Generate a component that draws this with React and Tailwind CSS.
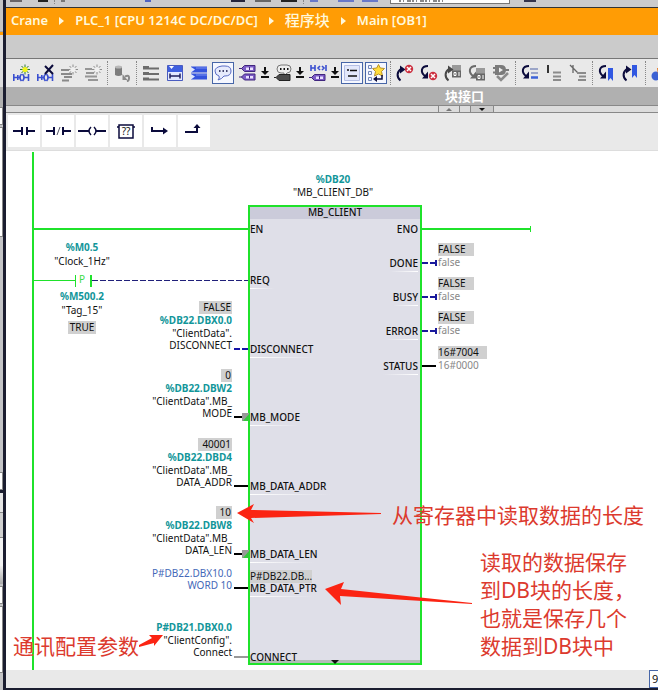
import React from 'react';
import clsx from 'clsx';

const NAVY = '#0b0b3c';
const BLUE = '#3a4fd0';
const GREEN = '#1fe22b';

const Icon = ({ children, w = 18 }) => (
  <svg width={w} height="18" viewBox={`0 0 ${w} 18`} fill="none" aria-hidden="true">
    {children}
  </svg>
);

/* Shared icon parts */
const Contacts = ({ y = 10, color = BLUE }) => (
  <g stroke={color} strokeWidth="1.600">
    <path d={`M1.800 ${y}v7M2 ${y + 3.5}h3M5.800 ${y + 1}v5M9.500 ${y}q-3 3.500 0 7M10.500 ${y}q3 3.500 0 7M16.500 ${y}v7`} />
    <path d={`M6 ${y + 3.5}h2M12 ${y + 3.5}h4`} />
  </g>
);

const Spark = ({ x, y, color, core }) => (
  <g transform={`translate(${x} ${y})`}>
    <path d="M0-5V5M-5 0H5M-3.500-3.500L3.500 3.500M-3.500 3.500L3.500-3.500" stroke={color} strokeWidth="1" />
    <circle r="2.600" fill={core} />
  </g>
);

const Tag = ({ y, fill = '#7d5cc6', edge = '#40267e' }) => (
  <g>
    <path d={`M0 ${y + 3.5}h3M2.500 ${y + 3.5}l3-3h10.500v6H5.500z`} fill={fill} stroke={edge} />
    <path d={`M7 ${y + 2.5}h7v2.500h-7z`} fill="#e9e0ff" />
    <path d={`M10.500 ${y + 2}v3`} stroke={edge} />
  </g>
);

const RedX = ({ x, y }) => (
  <g transform={`translate(${x} ${y})`}>
    <circle r="4.200" fill="#cc3040" />
    <path d="M-2-2L2 2M-2 2L2-2" stroke="#fff" strokeWidth="1.500" />
  </g>
);

const ArcUp = ({ color = NAVY }) => (
  <g>
    <path d="M4.500 16.500C0 13 1 7 5.500 5" stroke={color} strokeWidth="2" />
    <path d="M4 1.500l5.500 4-5.500 4z" fill={color} />
  </g>
);

const ArcDown = ({ color = NAVY }) => (
  <g>
    <path d="M8 2C1 2 0 8 5 12" stroke={color} strokeWidth="2" />
    <path d="M8 7.500v7H2z" fill={color} />
  </g>
);

const Chip = ({ y }) => (
  <g>
    <path d={`M8 ${y}h9v12h-9z`} fill="#9a9a9a" />
    <path d={`M8 ${y + 5.5}h9v7h-9z`} fill="#666" />
    <path d={`M10 ${y + 7.5}h2v3h-2zM15 ${y + 7}v4`} stroke="#fff" />
  </g>
);

const icons = {
  insertNet: <Icon><Contacts /><Spark x={13} y={5.5} color="#2f7b2f" core="#f2f51c" /></Icon>,
  deleteNet: <Icon><Contacts /><path d="M9 2l8 8M17 1L9 10" stroke={NAVY} strokeWidth="2" /></Icon>,
  insertRow: (
    <Icon>
      <path d="M1 6h8M1 10h11M4 13h8M2 16.500h7" stroke="#8a8a8a" strokeWidth="2" />
      <Spark x={13} y={5.5} color="#8d8d8d" core="#f0f0f0" />
    </Icon>
  ),
  addRow: (
    <Icon>
      <path d="M1 5h7M2 9h8M1 12.500h12M4 16h10" stroke="#969696" strokeWidth="2" />
      <Spark x={13} y={5.5} color="#8d8d8d" core="#f0f0f0" />
    </Icon>
  ),
  reset: (
    <Icon>
      <path d="M2 3v8q3.500 2 7 0V3z" fill="#7d7d7d" />
      <ellipse cx="5.500" cy="3" rx="3.500" ry="1.500" fill="#b9b9b9" />
      <path d="M12 12.500q4.500-2 4 2 0 2-2 3" stroke="#8a8a8a" strokeWidth="2" />
      <path d="M9.500 10v6h5z" fill="#8a8a8a" />
    </Icon>
  ),
  networks: (
    <Icon>
      <path d="M1 2h6v1.500h10v2H1zM1 8h6v1h10v2H1zM1 13.500h6v1h10v2H1z" fill="#6c6c6c" />
    </Icon>
  ),
  openNet: (
    <Icon>
      <path d="M1.500 1.500h15v15h-15z" fill="#3f60e0" stroke="#4a5cc0" />
      <path d="M2 8h14v8H2z" fill="#e3e9ff" />
      <path d="M3 2h5L5.500 5z" fill="#fff" />
      <path d="M4 9.500v5M14 9.500v5M4 12h10" stroke="#20205c" strokeWidth="1.500" />
    </Icon>
  ),
  closeNet: (
    <Icon>
      <path d="M1 2.500h16v6H1zM1 9.500h16v6H1z" fill="#3453dd" />
      <path d="M1 3l4 2.500-4 3zM1 10l4 2.500-4 3z" fill="#dfe6ff" />
      <path d="M6 4h11M6 11h11" stroke="#7890f0" strokeWidth="1" />
    </Icon>
  ),
  comment: (
    <Icon>
      <path
        d="M8 2h3q6 0 6 5t-6 5h-1q-2 3-6 4 2-2 1-4Q1 11 1 7t7-5z"
        fill="#e6eafc"
        stroke="#5a6cc4"
      />
      <path d="M5 7h1.500M8.500 7H10M12 7h1.500" stroke={NAVY} strokeWidth="1.500" />
    </Icon>
  ),
  operands: <Icon><Tag y={1} /><Tag y={9.5} /></Icon>,
  tagInfo: (
    <Icon>
      <path d="M7 1h6q4 0 4 4t-4 4l-3 3V9H7Q3 9 3 5t4-4z" fill="#eee" stroke="#777" />
      <path d="M6 5h1.500M9.500 5H11M13 5h1.500" stroke="#111" strokeWidth="2" />
      <path d="M0 13.500h2M2 13.500l3-3h11v6H5z" fill="#4a4a4a" stroke="#222" />
    </Icon>
  ),
  netTag: (
    <Icon>
      <path d="M2 1v6M2 4h4M6 1v6M11 2L9 4l2 2M13 2l2 2-2 2M17 1v6" stroke={BLUE} strokeWidth="1.600" />
      <Tag y={10} />
    </Icon>
  ),
  list: (
    <Icon>
      <path d="M1.500 1.500h15v15h-15z" fill="#e3e8fb" stroke="#b4bee4" />
      <path d="M4 6h2" stroke="#111" strokeWidth="1.500" />
      <path d="M7 6.500h7M5 12h9" stroke="#111" strokeWidth="1.600" />
    </Icon>
  ),
  favourites: (
    <Icon>
      <path d="M1.500 1.500h3v3h-3zM1.500 7.500h3v3h-3zM1.500 13.500h3v3h-3z" stroke="#7286b8" />
      <path d="M11.500 .500l1.800 3.500 4.200.5-3 3 1 4.500-4-2-4 2 1-4.500-3-3 4.200-.5z" fill="#ffdc3c" stroke="#b8922a" />
      <path d="M15 11v4H9" stroke={NAVY} strokeWidth="1.500" />
      <path d="M10 12v6l-4-3z" fill={NAVY} />
    </Icon>
  ),
  prevError: <Icon><ArcUp /><RedX x={13} y={5} /></Icon>,
  nextError: <Icon><ArcDown /><RedX x={13} y={12} /></Icon>,
  upload: <Icon><Chip y={1} /><ArcUp color="#484848" /></Icon>,
  download: <Icon><Chip y={4} /><ArcDown color="#6a6a6a" /></Icon>,
  consistency: (
    <Icon>
      <path d="M1 4h3M1 8.500h3M13 6h4M4 2h5q4 0 4 4t-4 4H4z" fill="#7b7b7b" stroke="#7b7b7b" strokeWidth="2" />
      <path d="M7 3.500v5l4-2.500z" fill="#eee" />
      <path d="M5 12l4 4 7-7" stroke="#8b8b8b" strokeWidth="2.500" />
    </Icon>
  ),
  goto: (
    <Icon>
      <ArcDown />
      <path d="M9 5h8M10 9h7" stroke="#9ca6c8" strokeWidth="2" />
      <path d="M10 13.500h7" stroke="#3c62d8" strokeWidth="2.500" />
    </Icon>
  ),
  levelBar: (
    <Icon>
      <path d="M3 1v8" stroke="#333" strokeWidth="2" />
      <path d="M8 8.500h8M8 12.500h8M8 16h8" stroke="#8b8b8b" strokeWidth="2" />
    </Icon>
  ),
  levelOff: (
    <Icon>
      <path d="M4 1v8M1 1l8 8" stroke="#666" strokeWidth="1.300" />
      <path d="M8 9h9M10 12.500h7M9 16h8" stroke="#8b8b8b" strokeWidth="2" />
    </Icon>
  ),
  nextMark: <Icon><ArcDown /><path d="M10 4h5v13l-2.500-3-2.500 3z" fill="#3158e2" /></Icon>,
  prevMark: <Icon><ArcUp /><path d="M10 1h5v13l-2.500-3-2.500 3z" fill="#3158e2" /></Icon>,
  monitor: (
    <Icon>
      <circle cx="5" cy="12" r="4.500" fill="#3c62d4" />
      <path d="M6 4h8v13H8z" fill="#e37a2b" />
    </Icon>
  ),
};

const toolGroups = [
  [['insertNet', 'Insert network'], ['deleteNet', 'Delete network'], ['insertRow', 'Insert row'], ['addRow', 'Add row']],
  [['reset', 'Reset start values']],
  [
    ['networks', 'Networks'], ['openNet', 'Open all networks'], ['closeNet', 'Close all networks'],
    ['comment', 'Free comments', 'on'], ['operands', 'Operands', 'menu'], ['tagInfo', 'Tag information', 'menu'],
    ['netTag', 'Network tags', 'menu'], ['list', 'Network comments', 'on'], ['favourites', 'Favorites', 'on'],
  ],
  [
    ['prevError', 'Previous error'], ['nextError', 'Next error'], ['upload', 'Upload'],
    ['download', 'Download'], ['consistency', 'Consistency check'],
  ],
  [['goto', 'Go to'], ['levelBar', 'Show level'], ['levelOff', 'Hide level']],
  [['nextMark', 'Next bookmark'], ['prevMark', 'Previous bookmark']],
  [['monitor', 'Monitoring']],
];

const ToolButton = ({ name, label, kind }) => (
  <button
    type="button"
    aria-label={label}
    className={clsx(
      'flex h-[22px] shrink-0 items-center',
      kind === 'menu' && 'w-[35px] gap-1 pl-1',
      kind === 'on' && 'mx-px w-[22px] justify-center border border-[#4766a8] bg-[#f5f7ff]',
      !kind && 'w-6 justify-center',
    )}
  >
    {icons[name]}
    {kind === 'menu' && (
      <svg width="8" height="12" viewBox="0 0 8 12" className="shrink-0" aria-hidden="true">
        <path d="M3 0h2v4h3L4 8 0 4h3zM0 9h8v2H0z" fill="#111" />
      </svg>
    )}
  </button>
);

/* Lower edge of the application toolbar that scrolls out above the editor */
const TopStrip = () => (
  <div className="flex h-[7px] shrink-0 items-start overflow-hidden bg-[#cbcbcd] pl-1">
    <span className="h-0.5 w-3 bg-[#686468]" />
    <span className="ml-4 h-0.5 w-2.5 bg-[#222]" />
    <span className="ml-1.5 h-1 border-l border-dotted border-[#888]" />
    <span className="ml-1.5 h-0.5 w-1 bg-[#777]" />
    <span className="ml-20 h-0.5 w-1.5 bg-[#4f62c0]" />
    <span className="ml-20 h-0.5 w-3.5 bg-[#24243c]" />
    <span className="ml-2.5 h-0.5 w-4 bg-[#666]" />
    <span className="ml-2.5 h-0.5 w-4 border border-[#222] bg-white" />
    <span className="ml-1.5 h-1 border-l border-dotted border-[#888]" />
    <span className="ml-1.5 h-0.5 w-2 bg-[#6878c8]" />
    <span className="ml-5 h-0.5 w-4 bg-[#6878c8]" />
    <span className="ml-2 h-0.5 w-4 bg-[#6878c8]" />
    <span className="ml-3 flex h-1 w-[120px] items-start border border-t-0 border-[#777] bg-white pl-2">
      <svg width="44" height="2" viewBox="0 0 44 2" aria-hidden="true">
        <path d="M0 1h44" stroke="#888" strokeWidth="2" strokeDasharray="2 2 1 3 4 1" />
      </svg>
    </span>
    <span className="ml-3.5 h-0.5 w-3 bg-[#33334c]" />
  </div>
);

const crumbs = ['Crane', 'PLC_1 [CPU 1214C DC/DC/DC]', '程序块', 'Main [OB1]'];

const Breadcrumb = () => (
  <nav className="flex h-7 shrink-0 items-center gap-[11px] border-t border-[#333] bg-[#ff9c05] pb-0.5 pl-[5px] text-[13px] font-semibold whitespace-nowrap text-[#fff8dc]">
    {crumbs.map((c, i) => (
      <React.Fragment key={c}>
        {i > 0 && (
          <svg width="5" height="8" viewBox="0 0 5 8" aria-hidden="true"><path d="M0 0l5 4-5 4z" fill="#fff8dc" /></svg>
        )}
        <a href="#" className={i === 2 ? 'text-[15px] font-medium' : ''}>{c}</a>
      </React.Fragment>
    ))}
  </nav>
);

const favourites = [
  ['Normally open contact', 'M3 16h9M17 16h8M12 12v8M17 12v8'],
  ['Normally closed contact', 'M2 16h8M19 16h8M10 12v8M19 12v8'],
  ['Assignment', 'M0 16h11M18 16h10'],
  ['Empty box', 'M7 10h14v13H7zM5 12h2M21 12h2'],
  ['Open branch', 'M6 12v4h12'],
  ['Close branch', 'M5 17h12v-5'],
];

const Favourites = () => (
  <div className="flex h-[38px] shrink-0 gap-0.5 border-b border-[#ddd] bg-[#e9e9e9] pt-0.5 pl-0.5">
    {favourites.map(([label, d], i) => (
      <button key={label} type="button" aria-label={label} className="relative flex size-8 items-center justify-center bg-white">
        <svg width="28" height="32" viewBox="0 0 28 32" fill="none" aria-hidden="true">
          <path d={d} stroke={NAVY} strokeWidth={i === 3 ? 1.5 : 2} />
          {i === 1 && <path d="M13 20l3-8" stroke="#556" />}
          {i === 2 && <path d="M13 12q-4 4 0 8M16 12q4 4 0 8" stroke={NAVY} strokeWidth="1.500" />}
          {i === 4 && <path d="M17 12.500l5 3.500-5 3.500z" fill={NAVY} />}
          {i === 5 && <path d="M13.500 13l3.500-4 3.500 4z" fill={NAVY} />}
        </svg>
        {i === 3 && <span className="absolute inset-0 text-center text-[10px] leading-[33px] text-[#111]">??</span>}
      </button>
    ))}
  </div>
);

/* Diagram data, in canvas coordinates */
const inputs = [
  { pin: 'EN', y: 78 },
  { pin: 'REQ', y: 129, line: 'w-6' },
  { pin: 'DISCONNECT', y: 198, line: 'w-16' },
  { pin: 'MB_MODE', y: 266, line: 'w-12' },
  { pin: 'MB_DATA_ADDR', y: 335, line: 'w-20' },
  { pin: 'MB_DATA_LEN', y: 403, line: 'w-16' },
  { pin: 'MB_DATA_PTR', y: 437, line: 'w-16' },
  { pin: 'CONNECT', y: 506 },
];

const outputs = [
  { pin: 'ENO', y: 78 },
  { pin: 'DONE', y: 112, value: 'FALSE', operand: 'false' },
  { pin: 'BUSY', y: 146, value: 'FALSE', operand: 'false' },
  { pin: 'ERROR', y: 180, value: 'FALSE', operand: 'false' },
  { pin: 'STATUS', y: 215, value: '16#7004', operand: '16#0000' },
];

const operands = [
  { y: 150, value: 'FALSE', address: '%DB22.DBX0.0', name: ['"ClientData".', 'DISCONNECT'] },
  { y: 218, value: '0', address: '%DB22.DBW2', name: ['"ClientData".MB_', 'MODE'] },
  { y: 287, value: '40001', address: '%DB22.DBD4', name: ['"ClientData".MB_', 'DATA_ADDR'] },
  { y: 355, value: '10', address: '%DB22.DBW8', name: ['"ClientData".MB_', 'DATA_LEN'] },
  { y: 416, name: ['P#DB22.DBX10.0', 'WORD 10'], constant: true },
  { y: 470, address: 'P#DB21.DBX0.0', name: ['"ClientConfig".', 'Connect'] },
];

const Value = ({ children, className }) => (
  <span className={clsx('block h-[13px] w-fit bg-[#d0d0d0] leading-3', className)}>{children}</span>
);

const Wires = () => (
  <svg className="absolute top-0 left-0" width="652" height="519" viewBox="0 0 652 519" fill="none" aria-hidden="true">
    <path d="M27 1v518M27 78h216M416 78h108" stroke={GREEN} strokeWidth="2" />
    <path d="M524.500 75v6M69.500 124v12M27 129.500h42" stroke={GREEN} />
    <path d="M85 124v12" stroke={GREEN} strokeWidth="2" />
    <path d="M86 129.500h156" stroke="#20207a" strokeWidth="1" strokeDasharray="6 2" />
    <path d="M228 198h14" stroke="#1414a8" strokeWidth="2" strokeDasharray="6 2" />
    <path d="M228 266h9M228 335h14M228 403h9M228 437h14M416 215h14" stroke="#000" strokeWidth="2" />
    <path d="M228 506h14" stroke="#999" strokeWidth="2" />
    <path d="M416 112h14M416 146h14M416 180h14" stroke="#1a1a9c" strokeWidth="2" strokeDasharray="6 2" />
    <path d="M430 109v6M430 143v6M430 177v6" stroke="#1a1a9c" strokeWidth="2" />
  </svg>
);

const Block = () => (
  <section className="absolute top-[54px] left-[242px] h-[460px] w-[174px] border-2 border-[#1fe22b] bg-[#dfdfe8]">
    <h2 className="h-3 bg-[#cbcbda] text-center leading-[11px] font-medium">MB_CLIENT</h2>
    <div className="absolute inset-x-0 bottom-0 flex h-[3px] justify-center bg-[#b4bcb8]">
      <svg width="8" height="4" viewBox="0 0 8 4" aria-hidden="true"><path d="M0 0h8L4 4z" fill="#111" /></svg>
    </div>
    {inputs.map((p) => (
      <div key={p.pin} className="absolute left-0 leading-3 font-medium" style={{ top: p.y - 62 }}>
        {p.pin}
        {p.line && <div className={clsx('mt-0.5 h-px bg-linear-to-r from-white to-[#dfdfe8]', p.line)} />}
      </div>
    ))}
    {outputs.map((p) => (
      <div key={p.pin} className="absolute right-0.5 leading-3 font-medium" style={{ top: p.y - 62 }}>
        {p.pin}
        {p.value && <div className="mt-0.5 h-px bg-linear-to-l from-white to-[#dfdfe8]" />}
      </div>
    ))}
    <Value className="absolute top-[363px] left-0 w-[69px]">P#DB22.DB...</Value>
  </section>
);

const teal = 'font-bold text-[#12969a]';

const Contact = () => (
  <div className="absolute top-[90px] left-10 w-[72px] text-center">
    <p className={clsx('leading-[13px]', teal)}>%M0.5</p>
    <p className="leading-[14px]">"Clock_1Hz"</p>
    <p className="py-1.5 leading-[10px] text-[#3cdc46]">P</p>
    <p className={clsx('leading-[13px]', teal)}>%M500.2</p>
    <p className="leading-[14px]">"Tag_15"</p>
    <Value className="mx-auto mt-1 px-0.5">TRUE</Value>
  </div>
);

const note = 'absolute text-[21px] leading-7 text-[#dc3a2e]';

const Notes = () => (
  <>
    <svg className="absolute top-0 left-0" width="652" height="519" viewBox="0 0 652 519" aria-hidden="true">
      <g fill="#fb2413">
        <path d="M231 362l17-9-3 6 130 3v1l-130 4 3 5z" />
        <path d="M319 438l19-7-3 7 131 14v1l-132-8 1 9z" />
        <path d="M157 484l-14 0 3 3-13 7v2l15-4v3z" />
      </g>
    </svg>
    <p className={clsx(note, 'top-[350px] left-[386px] whitespace-nowrap')}>从寄存器中读取数据的长度</p>
    <p className={clsx(note, 'top-[397px] left-[474px] whitespace-nowrap')}>
      读取的数据保存<br />到DB块的长度，<br />也就是保存几个<br />数据到DB块中
    </p>
    <p className={clsx(note, 'top-[481px] left-[7px] whitespace-nowrap')}>通讯配置参数</p>
  </>
);

const Ladder = () => (
  <main className="relative h-[519px] overflow-hidden text-[10px] whitespace-nowrap text-[#111]">
    <Wires />
    <div className="absolute top-[22px] left-[268px] w-[118px] text-center leading-[13px]">
      <p className={teal}>%DB20</p>
      <p>"MB_CLIENT_DB"</p>
    </div>
    <Block />
    <Contact />
    {operands.map((o) => (
      <div
        key={o.y}
        className={clsx('absolute left-[126px] flex w-[100px] flex-col items-end leading-3', o.constant && 'text-[#4468b8]')}
        style={{ top: o.y }}
      >
        {o.value && <Value className="pr-px pl-1">{o.value}</Value>}
        {o.address && <span className={clsx('leading-[13px]', teal)}>{o.address}</span>}
        {o.name.map((n) => <span key={n}>{n}</span>)}
      </div>
    ))}
    {outputs.filter((o) => o.value).map((o) => (
      <div key={o.pin} className="absolute left-[432px]" style={{ top: o.y - 20 }}>
        <Value className="pr-2">{o.value}</Value>
        <span className="block leading-3 text-[#888]">{o.operand}</span>
      </div>
    ))}
    {[266, 403].map((y) => (
      <svg key={y} className="absolute left-[236px]" style={{ top: y - 4 }} width="7" height="8" viewBox="0 0 7 8" aria-hidden="true">
        <path d="M0 0h7v8H0z" fill="#999" />
        <path d="M7 1v7H1z" fill="#36c83e" />
      </svg>
    ))}
    <Notes />
  </main>
);

/* Edge of the project tree, left of the editor */
const SideEdge = () => (
  <aside className="flex w-1.5 shrink-0 flex-col border-r-3 border-[#1b1d30] bg-[#c4c4c6]">
    <div className="h-8 border-b border-[#aaa]" />
    <div className="h-[3px] bg-[#ff9c05]" />
    <div className="h-[52px] bg-[#dcdcde]" />
    <div className="h-5 bg-[#b0b0b0]" />
    <div className="h-[18px] border border-l-0 border-[#888] bg-white" />
    <div className="mt-0.5 h-[110px] border border-l-0 border-[#888] bg-white" />
    <div className="mt-[235px] h-[18px] border border-l-0 border-[#888] bg-white" />
    <div className="h-[3px] bg-[#1b1d30]" />
    <div className="h-5 border-b border-[#888] bg-[#e5e5e5]" />
    <div className="h-[25px] border-b border-[#888] bg-[#d0d0d0]" />
    <div className="h-7 bg-[#f2f2f2]" />
    <div className="h-[18px] bg-linear-to-b from-[#eee] to-[#aaa]" />
    <div className="mt-0.5 h-[18px] border border-l-0 border-[#888] bg-white" />
    <div className="mt-0.5 h-[67px] border border-l-0 border-[#888] bg-white" />
  </aside>
);

const App = () => (
  <div className="flex min-h-screen overflow-hidden bg-white font-['Noto_Sans','Noto_Sans_CJK_SC',sans-serif]">
    <SideEdge />
    <div className="flex min-w-0 flex-1 flex-col">
      <TopStrip />
      <Breadcrumb />
      <div className="h-6 shrink-0 border-b border-[#777] bg-[#cbcbcb]" />
      <div className="flex h-7 shrink-0 items-center overflow-hidden bg-[#e9e9e9] pl-[3px]">
        {toolGroups.map((group, i) => (
          <React.Fragment key={group[0][0]}>
            {i > 0 && <span className="mx-0.5 h-6 shrink-0 border-l border-dotted border-[#888]" />}
            {group.map(([name, label, kind]) => <ToolButton key={name} name={name} label={label} kind={kind} />)}
          </React.Fragment>
        ))}
      </div>
      <div className="h-[18px] shrink-0 bg-[#b0b0b0] pl-[439px] text-[13px] leading-[18px] font-bold text-white">块接口</div>
      <div className="flex h-[8px] shrink-0 border-t border-b border-[#888] bg-[#dcdcdc] pl-[432px]">
        <button type="button" aria-label="Collapse" className="flex h-1.5 w-[22px] items-center justify-center border-x border-[#888]">
          <svg width="6" height="3" viewBox="0 0 6 3"><path d="M0 3h6L3 0z" fill="#777" /></svg>
        </button>
        <button type="button" aria-label="Expand" className="ml-2.5 flex h-1.5 w-6 items-center justify-center border-x border-[#888] bg-[#ccc]">
          <svg width="6" height="3" viewBox="0 0 6 3"><path d="M0 0h6L3 3z" fill="#111" /></svg>
        </button>
      </div>
      <Favourites />
      <Ladder />
      <footer className="mt-auto flex h-5 shrink-0 justify-end overflow-hidden border-b-2 border-[#1b1d30] bg-[#e9e9e9]">
        <input
          aria-label="Zoom"
          defaultValue="9"
          className="w-[9px] border border-r-0 border-[#4766a8] bg-white pl-0.5 text-[11px] text-[#111]"
        />
      </footer>
    </div>
  </div>
);

export default App;
